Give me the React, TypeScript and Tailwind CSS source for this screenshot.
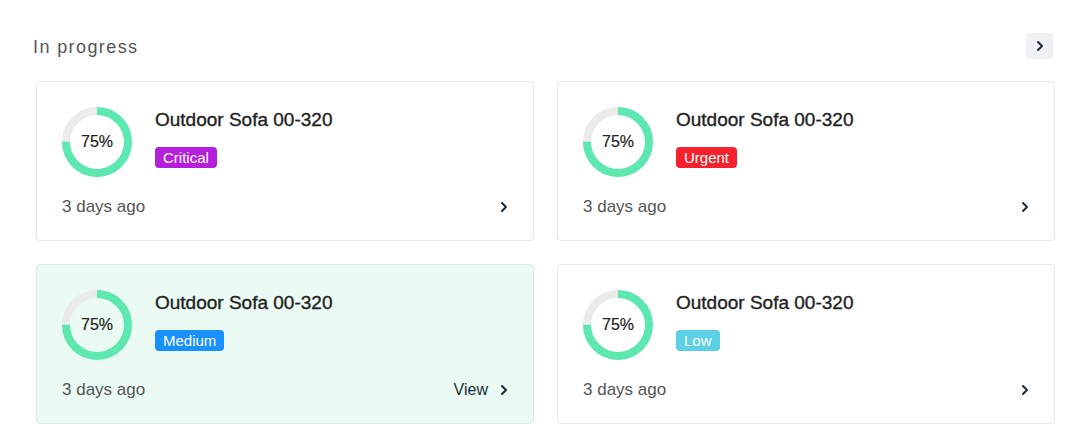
import React from 'react';

type Item = {
  id: number;
  title: string;
  percent: number;
  priority: 'Critical' | 'Urgent' | 'Medium' | 'Low';
  when: string;
  active?: boolean;
};

const items: Item[] = [
  { id: 1, title: 'Outdoor Sofa 00-320', percent: 75, priority: 'Critical', when: '3 days ago' },
  { id: 2, title: 'Outdoor Sofa 00-320', percent: 75, priority: 'Urgent', when: '3 days ago' },
  { id: 3, title: 'Outdoor Sofa 00-320', percent: 75, priority: 'Medium', when: '3 days ago', active: true },
  { id: 4, title: 'Outdoor Sofa 00-320', percent: 75, priority: 'Low', when: '3 days ago' },
];

const badgeColors: Record<Item['priority'], string> = {
  Critical: 'bg-[#b51fdc]',
  Urgent: 'bg-[#f5222d]',
  Medium: 'bg-[#1890ff]',
  Low: 'bg-[#5cd1e5]',
};

const Chevron = () => (
  <svg width="8" height="14" viewBox="0 0 8 14" fill="none">
    <path d="M2 3l4 4-4 4" stroke="#1c2b3a" strokeWidth="2" strokeLinecap="round" strokeLinejoin="round" />
  </svg>
);

function Ring({ percent }: { percent: number }) {
  const r = 31;
  const c = 2 * Math.PI * r;
  return (
    <div className="relative w-[70px] h-[70px] shrink-0">
      <svg width="70" height="70" viewBox="0 0 70 70" className="-rotate-90">
        <circle cx="35" cy="35" r={r} fill="none" stroke="#ebebeb" strokeWidth="8" />
        <circle
          cx="35"
          cy="35"
          r={r}
          fill="none"
          stroke="#5de8b2"
          strokeWidth="8"
          strokeDasharray={`${(c * percent) / 100} ${c}`}
        />
      </svg>
      <div className="absolute inset-0 flex items-center justify-center text-[16px] text-[#222] [-webkit-text-stroke:0.2px_#222]">
        {percent}%
      </div>
    </div>
  );
}

function Card({ item }: { item: Item }) {
  return (
    <div
      className={`rounded-[4px] border px-[25px] pt-[25px] pb-[23px] ${
        item.active ? 'bg-[#ebfbf3] border-[#dfe8e4]' : 'bg-white border-[#e4e7eb]'
      }`}
    >
      <div className="flex items-start gap-[23px]">
        <Ring percent={item.percent} />
        <div className="pt-px">
          <div className="text-[19px] leading-6 text-[#222] [-webkit-text-stroke:0.35px_#222]">{item.title}</div>
          <span
            className={`mt-[15px] inline-block rounded-[4px] px-[8px] h-[21px] leading-[21px] text-[15px] text-white ${badgeColors[item.priority]}`}
          >
            {item.priority}
          </span>
        </div>
      </div>
      <div className="mt-[20px] flex items-center justify-between h-5">
        <span className="text-[17px] text-[#555]">{item.when}</span>
        <div className="flex items-center gap-[12px]">
          {item.active && <span className="text-[16px] text-[#1c2b3a]">View</span>}
          <Chevron />
        </div>
      </div>
    </div>
  );
}

export default function App() {
  return (
    <div className="bg-white w-[1086px] h-[448px] pt-[33px]" style={{ fontFamily: '"Liberation Sans", Arial, sans-serif' }}>
      <div className="flex items-center justify-between pl-[33px] pr-[33px] h-[26px]">
        <h2 className="pt-[2px] text-[18px] text-[#555] tracking-[1.4px]">In progress</h2>
        <button className="w-[27px] h-[26px] rounded-[4px] bg-[#eef0f4] flex items-center justify-center">
          <Chevron />
        </button>
      </div>
      <div className="grid grid-cols-2 gap-x-[23px] gap-y-[23px] ml-[36px] mr-[31px] mt-[22px]">
        {items.map((item) => (
          <Card key={item.id} item={item} />
        ))}
      </div>
    </div>
  );
}
